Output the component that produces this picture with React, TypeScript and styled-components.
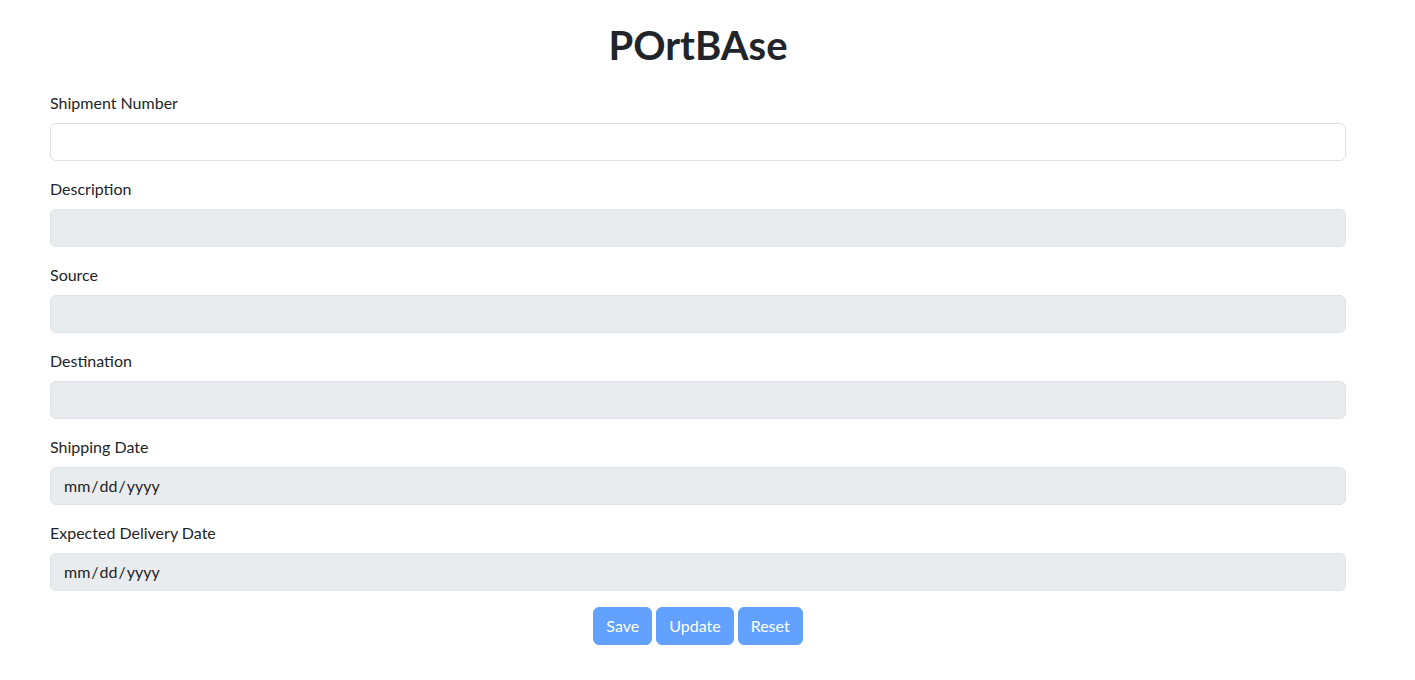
import React from "react"
import styled, { createGlobalStyle } from "styled-components"

const GlobalStyle = createGlobalStyle`
  * {
    box-sizing: border-box;
  }
  body {
    margin: 0;
    background: #fff;
    color: #212529;
    font-family: Lato, "Noto Sans", sans-serif;
    font-size: 16px;
    line-height: 1.5;
  }
`

const Page = styled.div`
  padding: 21px 69px 0 50px;
`
const Title = styled.h1`
  margin: 0 0 22px;
  font-size: 40px;
  font-weight: 700;
  line-height: 48px;
  text-align: center;
`
const Form = styled.form`
  display: flex;
  flex-direction: column;
`
const Group = styled.div`
  display: flex;
  flex-direction: column;
  margin-bottom: 16px;
`
const Label = styled.label`
  display: block;
  margin-bottom: 8px;
  line-height: 24px;
`
const Input = styled.input`
  display: block;
  width: 100%;
  height: 38px;
  padding: 6px 12px;
  font: inherit;
  color: #212529;
  background: ${props => (props.disabled ? "#e9ecef" : "#fff")};
  border: 1px solid #dee2e6;
  border-radius: 6px;
  outline: none;
  &::-webkit-calendar-picker-indicator {
    display: none;
  }
`
const Actions = styled.div`
  display: flex;
  justify-content: center;
  gap: 4px;
`
const Button = styled.button`
  height: 38px;
  padding: 6px 12px;
  font: inherit;
  color: #fff;
  background: #62a1fe;
  border: 1px solid #62a1fe;
  border-radius: 6px;
`

const fields = [
  { label: "Shipment Number", type: "text", disabled: false },
  { label: "Description", type: "text", disabled: true },
  { label: "Source", type: "text", disabled: true },
  { label: "Destination", type: "text", disabled: true },
  { label: "Shipping Date", type: "date", disabled: true },
  { label: "Expected Delivery Date", type: "date", disabled: true },
]

const App = () => {
  return (
    <Page>
      <GlobalStyle />
      <Title>POrtBAse</Title>
      <Form onSubmit={e => e.preventDefault()}>
        {fields.map(f => (
          <Group key={f.label}>
            <Label>{f.label}</Label>
            <Input type={f.type} disabled={f.disabled} />
          </Group>
        ))}
        <Actions>
          <Button type="button" disabled>Save</Button>
          <Button type="button" disabled>Update</Button>
          <Button type="button" disabled>Reset</Button>
        </Actions>
      </Form>
    </Page>
  )
}

export default App
